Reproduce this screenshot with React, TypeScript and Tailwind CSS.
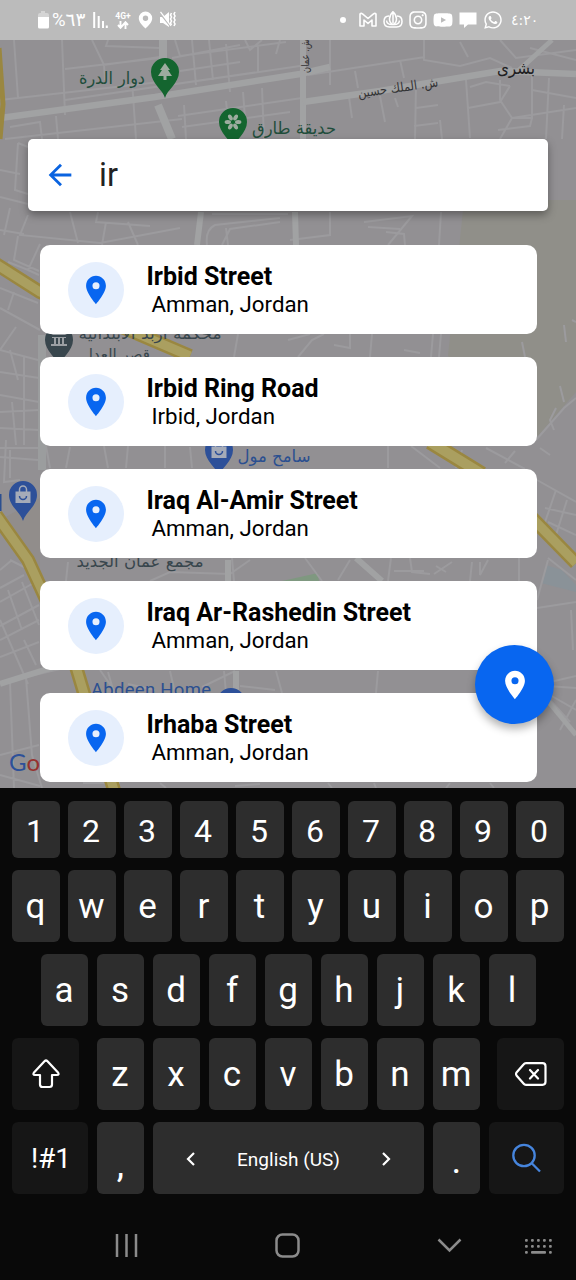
import type { ReactNode } from "react";
import { MdArrowBack, MdPlace } from "react-icons/md";
import { FaInstagram, FaWhatsapp, FaYoutube } from "react-icons/fa";

const places = [
  { name: "Irbid Street", area: "Amman, Jordan" },
  { name: "Irbid Ring Road", area: "Irbid, Jordan" },
  { name: "Iraq Al-Amir Street", area: "Amman, Jordan" },
  { name: "Iraq Ar-Rashedin Street", area: "Amman, Jordan" },
  { name: "Irhaba Street", area: "Amman, Jordan" },
];

type LabelProps = { x: number; y: number; w: number; size: number; fill: string; transform?: string; children: string };

function Label({ x, y, w, size, fill, transform, children }: LabelProps) {
  return (
    <text
      x={x}
      y={y}
      fontSize={size}
      fill={fill}
      textAnchor="middle"
      textLength={w}
      lengthAdjust="spacingAndGlyphs"
      transform={transform}
      className="font-['DejaVu_Sans',sans-serif]"
    >
      {children}
    </text>
  );
}

function MapPin({ x, y, fill, children }: { x: number; y: number; fill: string; children?: ReactNode }) {
  return (
    <g transform={`translate(${x} ${y})`}>
      <path d="M0 26C-2 18-14 11-14 0A14 14 0 0 1 14 0C14 11 2 18 0 26Z" fill={fill} />
      {children}
    </g>
  );
}

function Bag() {
  return (
    <g>
      <path d="M-7.500-3.500h15v11.500h-15z" fill="#a5abb8" />
      <path d="M-3.500-3v-2.500a3.500 3.500 0 0 1 7 0v2.500" stroke="#a5abb8" strokeWidth="1.500" fill="none" />
      <path d="M-3.500 1a3.500 3.500 0 0 0 7 0" stroke="#2d5099" strokeWidth="1.500" fill="none" />
    </g>
  );
}

function MapCanvas() {
  return (
    <svg className="absolute inset-0" width="576" height="788" viewBox="0 0 576 788" aria-hidden="true">
      <rect width="576" height="788" fill="#929093" />
      <path d="M464 200H576V392L538 436L448 356Z" fill="#908f89" />
      <path d="M0 520L40 498V590L20 560Z" fill="#918d8b" />
      <path d="M282 581L318 573L320 590H278Z" fill="#7f9880" />
      <path d="M546 565L562 570L576 585V592L541 583Z" fill="#8a9298" />

      <g fill="none" stroke="#9c9b9e" strokeWidth="2">
        <path d="M14 40L18 98M62 40L65 115M92 40L104 65L160 57M104 65L105 80M65 69L160 58M65 100L300 66M132 80L136 139M56 116L58 139M108 40L106 46L160 48M172 58L240 45M175 40L180 56L286 42M192 40L196 85M209 40L213 80M226 44L230 92M180 71L240 62M245 40L250 50L262 40M258 45V72M280 40L276 54M178 116L302 98M182 127L290 112M184 105L186 139M243 92L245 118M262 88L264 139M226 101L228 120M5 139L182 119M0 100L160 82M10 127L40 122L42 139" />
        <path d="M424 40V60L460 66L490 58L512 68M330 40V85M355 71L358 88M400 60L404 78M308 75L425 57M460 42L468 57M500 40L516 58L576 50M530 48L576 60M380 96L385 122M349 97L352 118M395 98L398 107M416 85L415 139M416 108L438 105M414 126L438 123M466 80L470 138M470 87L486 82L510 86M468 108L500 102L510 86M500 80V100L512 118L500 139M532 76V118L512 118M549 78L546 139M512 118L576 108M532 90L576 98M564 105L562 139M498 130L530 126L532 118M440 120L442 139" />
        <path d="M18 143L28 147M18 143L15 190L28 194M0 170L20 174M0 197L28 204M10 208L4 235M28 215L20 235L100 243L180 228M18 236L14 260L39 271M70 212L78 243M98 212L96 222L150 226M106 222L102 245M128 222L138 245M40 244L28 270L8 262M28 270L39 275M0 230L24 234" />
        <path d="M207 245Q205 230 215 225L280 218M212 214L288 214M226 228L228 245M222 245L230 229L280 222M364 222L412 216L388 245M368 227L400 229M386 232L404 234L405 245M441 212L439 245M330 212V235L290 240" />
        <path d="M0 288L38 303M14 292L8 310M0 308L40 330M16 327L0 350L38 360M0 372L39 378M10 350L18 380M0 395L39 402M24 356V445M12 402L16 445M0 412L39 410M0 428L39 430M6 440L4 482L20 480M0 448H39M0 457L38 460M10 450V478" />
        <path d="M238 334L234 357M288 340L310 334M298 357L312 340L324 334M334 345L350 348V334M372 334L370 357M433 334L431 357M441 334L439 357M404 350L420 353M522 342L525 357M564 325L566 342M572 320L576 322M536 440L564 408L576 398M556 408L550 420L554 430M560 386L564 402M388 446V468M411 446L440 468M462 450L456 468M486 448L525 469M505 463L515 451M540 448L550 455M46 446L50 468M70 447L66 468M104 446L108 468M128 446L126 468M165 446V468M190 447L192 468" />
        <path d="M537 480L576 502M556 490L543 528M567 500L556 535M545 508L576 515M548 522L576 535M537 608L576 602M571 610L573 650M548 560L537 600M548 558L576 580M519 558V581M305 558L322 581M338 580L350 560M391 558L388 581M410 558L412 572L430 574M434 574L452 562M436 566L446 572M472 562L470 581M480 562V575L488 560M394 571H424M232 558L234 581M250 560L230 574L170 572L150 581M10 560L40 575M68 562L66 581M0 570L12 560" />
        <path d="M0 602L39 580M0 588L24 575M0 626L39 605M0 640L39 620M0 657L39 642M8 590L22 630M22 582L39 625M0 620L28 684M24 640L36 665M0 683L90 662M10 682L14 788M26 678L32 755L42 788M0 755L39 745M0 775L40 786M100 670L116 693M108 672L114 693M170 671L175 693M128 684L155 690M202 687L235 671M224 671L226 693M276 671L282 693M378 671L376 693M240 686L275 690M550 682L576 676M550 695L576 710M550 700L570 722M560 730L576 700M547 686L576 688M83 783H120M160 783L166 788M235 786L260 784M328 783L332 788M374 783L376 788M450 783L446 788M490 783L494 788" />
      </g>
      <g fill="none" stroke="#a1a2a3">
        <path d="M0 118L155 97L300 74L330 67" strokeWidth="6.500" />
        <path d="M163 40V66M158 105L172 139" strokeWidth="8" />
        <path d="M303 40V139" strokeWidth="6" />
        <path d="M303 102L380 91L500 71L576 74" strokeWidth="6.500" />
        <path d="M518 71L552 40" strokeWidth="5" />
        <path d="M295 212L296 245M201 212L197 245" strokeWidth="6" />
        <path d="M42 335V470" strokeWidth="8" stroke="#9b9d9e" />
        <path d="M356 558L382 581M228 560V581M236 671V693M0 684L60 665" strokeWidth="6" />
        <path d="M543 695L576 735" strokeWidth="5" />
      </g>
      <g fill="none" stroke="#9a8740">
        <path d="M-1 48L3 104L0 139" strokeWidth="5" />
        <path d="M-4 264L40 292L190 356" strokeWidth="14" />
        <path d="M430 442L482 474" strokeWidth="15" />
        <path d="M532 518L576 563" strokeWidth="14" />
        <path d="M-4 515L28 560L74 660L86 700L114 790" strokeWidth="14" />
      </g>
      <g fill="none" stroke="#aa9f60">
        <path d="M-4 264L40 292L190 356" strokeWidth="9" />
        <path d="M430 442L482 474" strokeWidth="10" />
        <path d="M532 518L576 563" strokeWidth="9" />
        <path d="M-4 515L28 560L74 660L86 700L114 790" strokeWidth="9" />
      </g>

      <MapPin x={165} y={72} fill="#14652f">
        <path d="M0-9L5-2H3L7 4H1.500V8H-1.500V4H-7L-3-2H-5Z" fill="#9dac9f" />
      </MapPin>
      <MapPin x={233} y={122} fill="#14652f">
        <g fill="#9dac9f">
          {[0, 60, 120, 180, 240, 300].map((angle) => (
            <ellipse key={angle} cx="0" cy="-5.200" rx="2" ry="3.200" transform={`rotate(${angle + 30})`} />
          ))}
        </g>
      </MapPin>
      <MapPin x={59} y={340} fill="#38464d">
        <path d="M-8-5H8L0-9ZM-7-3H7V-2H-7ZM-5-2h2v6h-2zM-1-2h2v6h-2zM3-2h2v6h-2zM-8 4H8V6H-8Z" fill="#9b9fa3" />
      </MapPin>
      <MapPin x={219} y={450} fill="#2d5099">
        <Bag />
      </MapPin>
      <MapPin x={23} y={495} fill="#2d5099">
        <Bag />
      </MapPin>
      <MapPin x={231} y={702} fill="#2d5099" />

      <Label x={112} y={84} w={66} size={17} fill="#1f4d3b">دوار الدرة</Label>
      <Label x={294} y={134} w={84} size={17} fill="#1f4d3b">حديقة طارق</Label>
      <Label x={516} y={74} w={38} size={17} fill="#202022">بشرى</Label>
      <Label x={0} y={4} w={81} size={13} fill="#343436" transform="translate(398 88) rotate(-8)">ش. الملك حسين</Label>
      <Label x={0} y={4} w={34} size={11} fill="#343436" transform="translate(305 56) rotate(-90)">ش. عمان</Label>
      <Label x={150} y={339} w={143} size={16} fill="#38464d">محكمة اربد الابتدائية</Label>
      <Label x={116} y={360} w={68} size={16} fill="#38464d">قصر العدل</Label>
      <Label x={274} y={462} w={73} size={17} fill="#2b4f90">سامح مول</Label>
      <Label x={140} y={567} w={127} size={16} fill="#38464d">مجمع عمان الجديد</Label>
      <rect x="0" y="494" width="1.500" height="17" fill="#2b4f90" />
      <text x="91" y="696" fontSize="18.500" textLength="120" fill="#2b4f90" className="font-['Roboto',sans-serif]">Abdeen Home</text>
      <text x="9" y="771" fontSize="24" className="font-['Lato',sans-serif]">
        <tspan fill="#2d5099">G</tspan>
        <tspan fill="#96322f">o</tspan>
      </text>
    </svg>
  );
}

function StatusBar() {
  return (
    <header className="relative flex h-10 items-center bg-[#bbbbbb] text-white">
      <svg className="ml-[37px] shrink-0" width="13" height="18" viewBox="0 0 13 18">
        <path d="M4 0h4v2h2q2 0 2 2v3H1V4q0-2 2-2h1z" fill="#d4d4d4" />
        <path d="M1 6h11v10q0 1.500-1.500 1.500h-8Q1 17.500 1 16z" fill="#fff" />
      </svg>
      <span className="ml-0.5 w-[36px] whitespace-nowrap font-['Roboto','DejaVu_Sans',sans-serif] text-[18.500px] leading-none">%٦٣</span>
      <svg className="ml-[5px] shrink-0" width="15" height="18" viewBox="0 0 15 18">
        <path d="M1.200 1v16M5.700 5v12M10 10v7M13.800 14.500v2.500" stroke="#fff" strokeWidth="2" />
      </svg>
      <div className="ml-[6px] flex w-[18px] flex-col items-center">
        <span className="font-['Roboto',sans-serif] text-[8.500px] font-bold leading-[9px]">4G+</span>
        <svg width="12" height="8" viewBox="0 0 12 8" fill="none" stroke="#fff" strokeWidth="1.900">
          <path d="M3.500 0v6M1 4l2.500 2.800L6 4M8.500 8V2M6 4l2.500-2.800L11 4" />
        </svg>
      </div>
      <svg className="ml-1.5 shrink-0" width="15" height="18" viewBox="0 0 15 18">
        <path d="M7.500 0.500A6.700 6.700 0 0 1 14.200 7.200C14.200 11.500 10 15 7.500 17.500C5 15 .8 11.500 .8 7.200A6.700 6.700 0 0 1 7.500 .5ZM7.500 4.500A2.700 2.700 0 1 0 7.500 9.900A2.700 2.700 0 1 0 7.500 4.500Z" fill="#fff" fillRule="evenodd" />
      </svg>
      <svg className="ml-[6px] shrink-0" width="18" height="18" viewBox="0 0 18 18">
        <path d="M1 6h3l6-5v15l-6-4H1z" fill="#fff" />
        <path d="M0 1l12 15" stroke="#bbb" strokeWidth="1.500" />
        <path d="M1.500 .8l10.500 14" stroke="#fff" strokeWidth="1.200" />
        <path d="M12.500 2l-1 2 1 2-1 2 1 2-1 2 1 2M16 1l-1 2 1 2-1 2 1 2-1 2 1 2-1 2" stroke="#fff" strokeWidth="1.600" fill="none" />
      </svg>
      <span className="ml-auto size-[6px] rounded-full bg-white" />
      <svg className="ml-[13px] shrink-0" width="18" height="16" viewBox="0 0 18 16" fill="none" stroke="#fff" strokeWidth="1.600" strokeLinejoin="round">
        <path d="M1 2Q2 .8 3.500 1.800L9 6.500L14.500 1.800Q16 .8 17 2V14H13V8L9 11.500L5 8V14H1Z" />
      </svg>
      <svg className="ml-[6px] shrink-0" width="20" height="18" viewBox="0 0 20 18" fill="none" stroke="#fff" strokeWidth="1.500">
        <path d="M6 5Q1 5 1 10.500Q1 16 6.500 16H13.500Q19 16 19 10.500Q19 5 14 5" />
        <path d="M10 .8Q6.500 4 6.500 8T10 13.500Q13.500 12 13.500 8T10 .8V12M3.500 9.500Q4 14 10 13.500Q16 14 16.500 9.500" />
      </svg>
      <FaInstagram className="ml-[5px] size-[20px]" />
      <FaYoutube className="ml-[5px] size-[20px]" />
      <svg className="ml-[6px] shrink-0" width="18" height="18" viewBox="0 0 18 18">
        <path d="M.5 1.500H17.500V13.500H9L5 17V13.500H.5Z" fill="#fff" />
      </svg>
      <FaWhatsapp className="ml-[6px] size-[20px]" />
      <span className="ml-[8px] mr-[39px] w-[26px] whitespace-nowrap font-['DejaVu_Sans',sans-serif] text-[14px] leading-none">٤:٢٠</span>
    </header>
  );
}

const keyFace = "flex items-center justify-center rounded-[6px] text-white";

function Key({ children, className }: { children: ReactNode; className: string }) {
  return <div className={`${keyFace} ${className}`}>{children}</div>;
}

function Keyboard() {
  return (
    <section className="h-[492px] bg-[#090909] pt-[13px] font-['Roboto',sans-serif]">
      <div className="flex gap-2 px-3">
        {"1234567890".split("").map((c) => (
          <Key key={c} className="h-[57px] w-12 bg-[#2d2d2d] pt-[3px] pr-0.5 text-[32px] leading-none">{c}</Key>
        ))}
      </div>
      <div className="mt-3 flex gap-2 px-3">
        {"qwertyuiop".split("").map((c) => (
          <Key key={c} className="h-[72px] w-12 bg-[#2d2d2d] pr-px pt-px text-[35px] leading-none">{c}</Key>
        ))}
      </div>
      <div className="mt-3 flex justify-center gap-[9px]">
        {"asdfghjkl".split("").map((c) => (
          <Key key={c} className="h-[72px] w-[47px] bg-[#2d2d2d] text-[35px] leading-none">{c}</Key>
        ))}
      </div>
      <div className="mt-3 flex justify-between px-3">
        <Key className="h-[72px] w-[67px] bg-[#161616]">
          <svg width="28" height="30" viewBox="0 0 28 30" fill="none" stroke="#fff" strokeWidth="2.200" strokeLinejoin="round">
            <path d="M12.500 2.200Q14 .8 15.500 2.200L26 13.500Q27.500 16 25 16H20V25.500Q20 28 17.500 28H10.500Q8 28 8 25.500V16H3Q.5 16 2 13.500Z" />
          </svg>
        </Key>
        <div className="flex gap-[9px]">
          {"zxcvbnm".split("").map((c) => (
            <Key key={c} className="h-[72px] w-[47px] bg-[#2d2d2d] text-[35px] leading-none">{c}</Key>
          ))}
        </div>
        <Key className="h-[72px] w-[67px] bg-[#161616]">
          <svg width="32" height="24" viewBox="0 0 32 24" fill="none" stroke="#fff" strokeWidth="2.200" strokeLinecap="round" strokeLinejoin="round">
            <path d="M11 1.200H27.500Q30.500 1.200 30.500 4.200V19.800Q30.500 22.800 27.500 22.800H11Q9.500 22.800 8.500 21.500L1.500 13.500Q.5 12 1.500 10.500L8.500 2.500Q9.500 1.200 11 1.200ZM15 8L23 16.500M23 8L15 16.500" />
          </svg>
        </Key>
      </div>
      <div className="mt-3 flex gap-[9px] px-3">
        <Key className="h-[72px] w-[76px] bg-[#161616] pl-0.5 pt-0.5 text-[28px] leading-none">!#1</Key>
        <Key className="h-[72px] w-[47px] bg-[#2d2d2d] pt-3 text-[37px] leading-none">,</Key>
        <Key className="h-[72px] w-[271px] gap-[42px] bg-[#2d2d2d] pt-0.5 text-[19px] leading-none">
          <svg width="9" height="14" viewBox="0 0 9 14" fill="none" stroke="#fff" strokeWidth="2.200"><path d="M8 1L2 7L8 13" /></svg>
          <span className="whitespace-nowrap">English (US)</span>
          <svg width="9" height="14" viewBox="0 0 9 14" fill="none" stroke="#fff" strokeWidth="2.200"><path d="M1 1L7 7L1 13" /></svg>
        </Key>
        <Key className="h-[72px] w-[47px] bg-[#2d2d2d] pt-[5px] text-[37px] leading-none">.</Key>
        <Key className="h-[72px] w-[75px] bg-[#161616]">
          <svg width="30" height="30" viewBox="0 0 30 30" fill="none" stroke="#4685dd" strokeWidth="2.300">
            <circle cx="12" cy="12.500" r="10.700" />
            <path d="M19.500 20L28 28.500" />
          </svg>
        </Key>
      </div>
      <nav className="h-[86px] pt-[39px]">
        <div className="flex items-center pl-[115px] pr-[23px]">
          <svg width="23" height="25" viewBox="0 0 23 25" stroke="#8b8b8b" strokeWidth="2.500"><path d="M2 1v23M11.500 1v23M21 1v23" /></svg>
          <svg className="ml-[137px]" width="25" height="25" viewBox="0 0 25 25" fill="none" stroke="#8b8b8b" strokeWidth="2.500"><rect x="1.500" y="1.500" width="22" height="22" rx="6" /></svg>
          <svg className="ml-[137px]" width="25" height="15" viewBox="0 0 25 15" fill="none" stroke="#8b8b8b" strokeWidth="2.500"><path d="M1.500 1.500L12.500 12.500L23.500 1.500" /></svg>
          <svg className="ml-auto mt-0.5" width="29" height="18" viewBox="0 0 29 18" fill="#8b8b8b">
            {[1, 7, 13, 19, 25].map((x) => (
              <g key={x}>
                <rect x={x} y="1" width="2.800" height="2.800" rx="1" />
                <rect x={x} y="7" width="2.800" height="2.800" rx="1" />
              </g>
            ))}
            <rect x="1" y="13" width="2.800" height="2.800" rx="1" />
            <rect x="7" y="13" width="15" height="2.800" rx="1" />
            <rect x="25" y="13" width="2.800" height="2.800" rx="1" />
          </svg>
        </div>
      </nav>
    </section>
  );
}

export default function App() {
  return (
    <div className="h-[1280px] w-[576px] overflow-hidden bg-[#090909] font-['Roboto',sans-serif]">
      <main className="relative h-[788px] overflow-hidden">
        <MapCanvas />
        <StatusBar />
        <div className="relative mx-7 mt-[99px] flex h-[72px] items-center rounded-[5px] bg-white pl-[15px] shadow-[0_4px_9px_rgba(0,0,0,0.35)]">
          <MdArrowBack className="size-[34px] text-[#0a63e0]" />
          <span className="ml-[22px] text-[32.500px] leading-none text-[#222222]">ir</span>
        </div>
        <ul className="relative mx-[39.500px] mt-[34px] flex flex-col gap-[23px]">
          {places.map((p) => (
            <li key={p.name} className="flex h-[89px] items-center rounded-[10px] bg-white pl-[28px]">
              <div className="flex size-14 items-center justify-center rounded-full bg-[#e6effd]">
                <MdPlace className="size-[34px] text-[#0866f0]" />
              </div>
              <div className="ml-[23px] flex flex-col pt-[2px] text-black">
                <span className="text-[25px] font-bold leading-[28px]">{p.name}</span>
                <span className="pl-[5px] text-[22.300px] leading-[27px]">{p.area}</span>
              </div>
            </li>
          ))}
        </ul>
        <button className="absolute left-[475px] top-[645px] flex size-[79px] items-center justify-center rounded-full bg-[#0866f0] text-white shadow-[0_5px_9px_rgba(0,0,0,0.3)]">
          <MdPlace className="size-[34px]" />
        </button>
      </main>
      <Keyboard />
    </div>
  );
}
